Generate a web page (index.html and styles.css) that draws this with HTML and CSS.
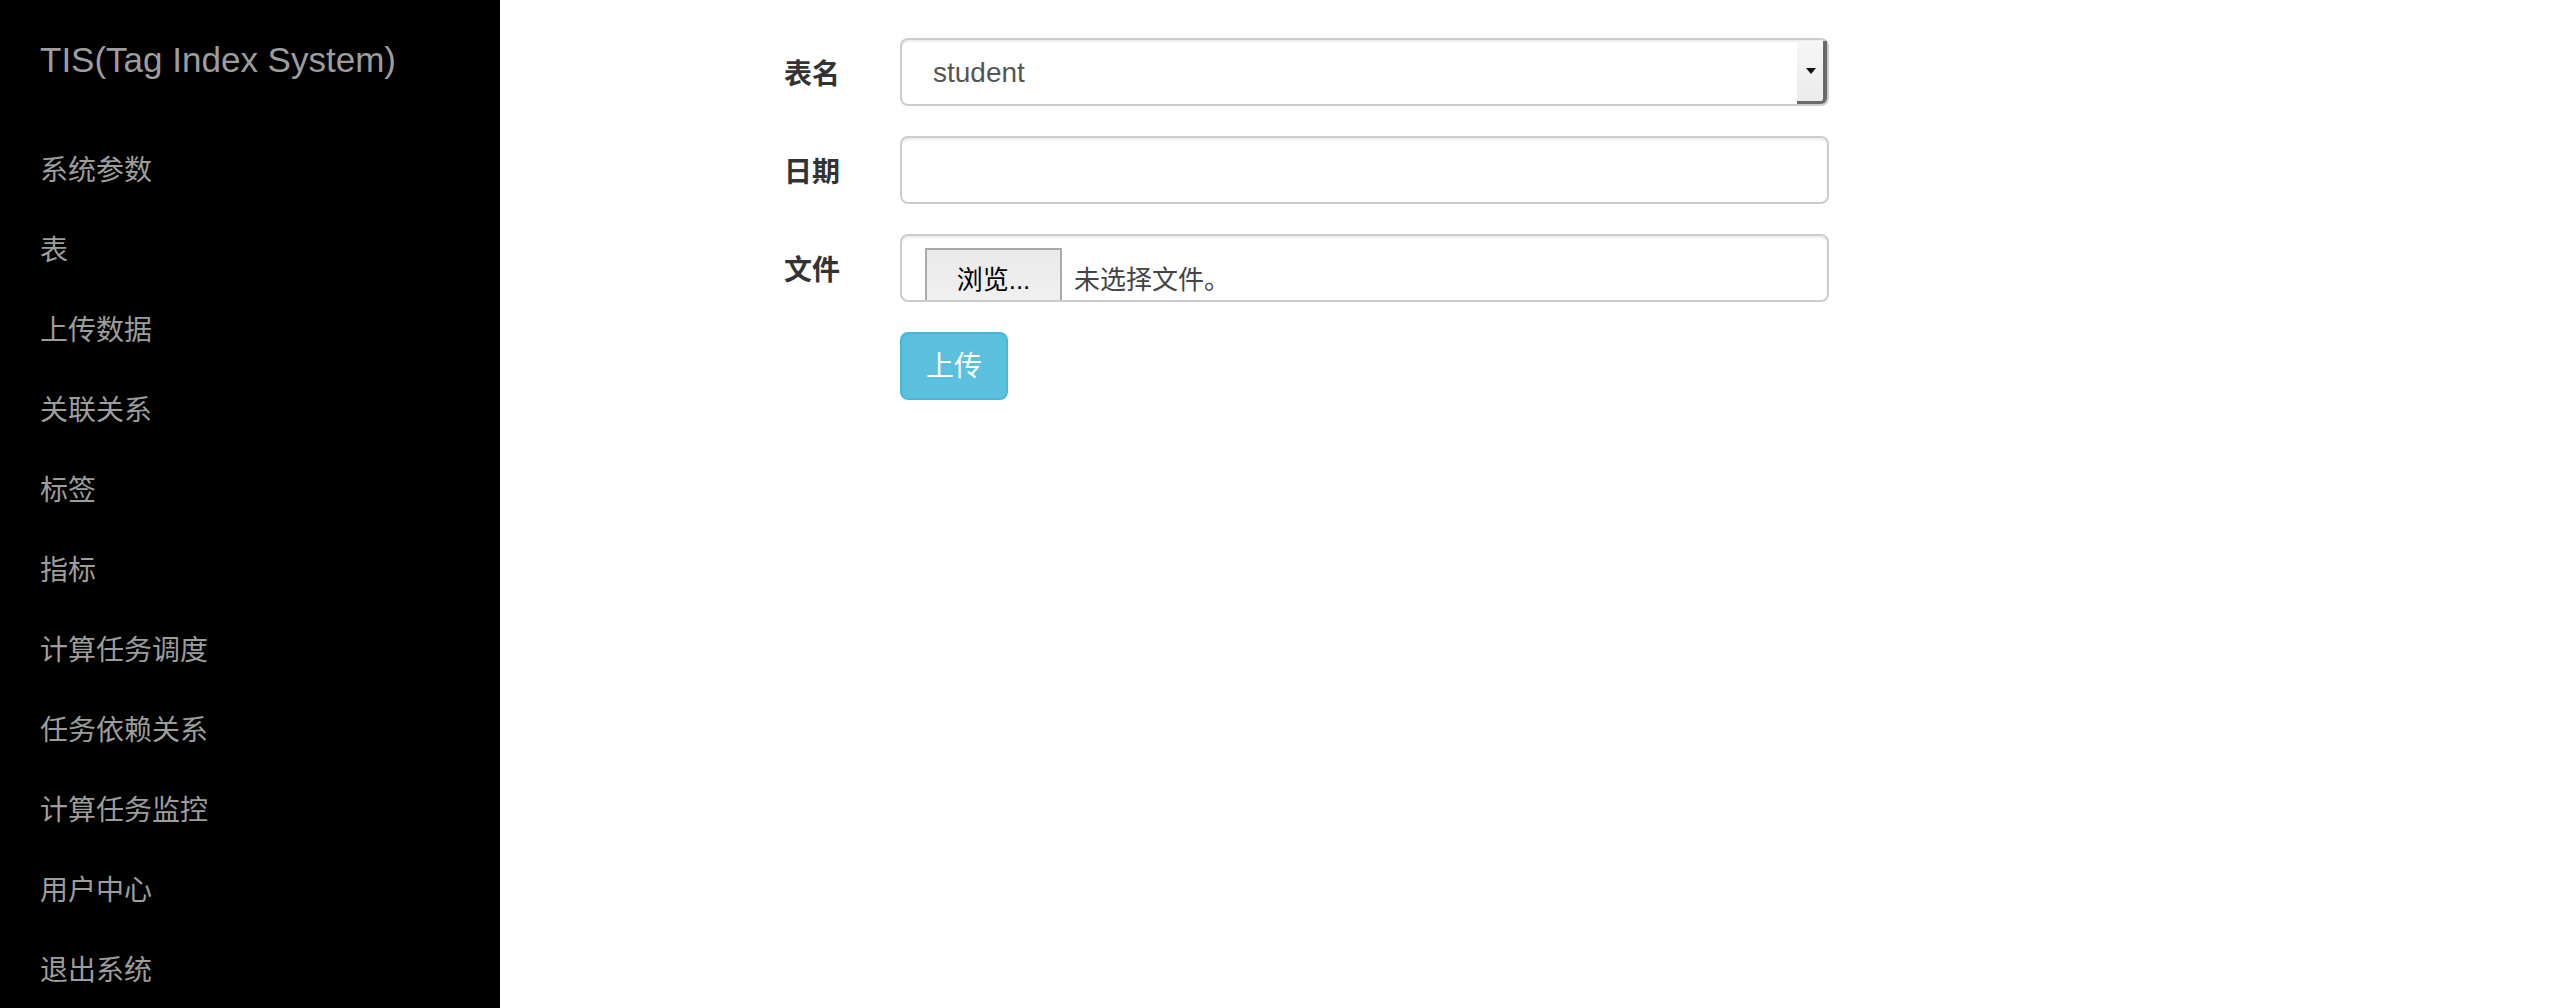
FILE: index.html
```html
<!DOCTYPE html>
<html lang="zh-CN">
<head>
<meta charset="utf-8">
<title>TIS(Tag Index System)</title>
<link rel="stylesheet" href="styles.css">
</head>
<body>
<aside class="sidebar">
  <div class="brand">TIS(Tag Index System)</div>
  <ul class="nav">
    <li>系统参数</li>
    <li>表</li>
    <li>上传数据</li>
    <li>关联关系</li>
    <li>标签</li>
    <li>指标</li>
    <li>计算任务调度</li>
    <li>任务依赖关系</li>
    <li>计算任务监控</li>
    <li>用户中心</li>
    <li>退出系统</li>
  </ul>
</aside>
<main class="main">
  <form class="form">
    <div class="row">
      <label class="label">表名</label>
      <div class="field">
        <div class="control select">
          <span class="select-value">student</span>
          <span class="select-arrow"><span class="tri"></span></span>
        </div>
      </div>
    </div>
    <div class="row">
      <label class="label">日期</label>
      <div class="field">
        <div class="control"></div>
      </div>
    </div>
    <div class="row">
      <label class="label">文件</label>
      <div class="field">
        <div class="control file">
          <span class="file-btn">浏览...</span>
          <span class="file-text">未选择文件。</span>
        </div>
      </div>
    </div>
    <div class="row">
      <div class="label-spacer"></div>
      <div class="field">
        <span class="btn-upload">上传</span>
      </div>
    </div>
  </form>
</main>
</body>
</html>
```

FILE: styles.css
```css
* { box-sizing: border-box; }
html, body { margin: 0; padding: 0; }
body {
  display: flex;
  width: 2560px;
  height: 1008px;
  overflow: hidden;
  background: #fff;
  font-family: "Liberation Sans", "Noto Sans CJK SC", sans-serif;
  color: #333;
}
.sidebar {
  width: 500px;
  flex: 0 0 500px;
  height: 100%;
  background: #000;
  color: #9d9d9d;
}
.brand {
  padding: 40px 40px 0;
  font-size: 35px;
  line-height: 40px;
  height: 80px;
}
.nav {
  list-style: none;
  margin: 51px 0 0;
  padding: 0;
}
.nav li {
  padding: 20px 40px;
  font-size: 28px;
  line-height: 40px;
}
.main {
  flex: 1;
  padding-top: 38px;
}
.form {
  padding-left: 123px;
}
.row {
  display: flex;
  margin-bottom: 30px;
}
.label, .label-spacer {
  width: 247px;
  flex: 0 0 247px;
  padding: 17px 30px 0 0;
  text-align: right;
  font-size: 28px;
  line-height: 40px;
  font-weight: bold;
  color: #333;
}
.field {
  padding-left: 30px;
}
.control {
  position: relative;
  width: 929px;
  height: 68px;
  border: 2px solid #ccc;
  border-radius: 8px;
  box-shadow: inset 0 2px 2px rgba(0,0,0,0.075);
  background: #fff;
  font-size: 28px;
  line-height: 40px;
  color: #555;
}
.select {
  padding: 13px 31px 11px;
}
.select-arrow {
  position: absolute;
  right: 0;
  top: 1px;
  bottom: 0;
  width: 30px;
  background: linear-gradient(#f6f6f6, #ebebeb);
  border-right: 4px solid #6a6a6a;
  border-bottom: 3px solid #6a6a6a;
  border-bottom-right-radius: 6px;
  display: flex;
  align-items: center;
  justify-content: center;
}
.tri {
  width: 0;
  height: 0;
  border-left: 5px solid transparent;
  border-right: 5px solid transparent;
  border-top: 6px solid #111;
  margin-left: 2px;
}
.file {
  overflow: hidden;
  padding: 12px 23px 0;
  display: flex;
  align-items: flex-start;
}
.file-btn {
  flex: 0 0 137px;
  height: 70px;
  border: 2px solid #aaa;
  background: linear-gradient(#e9e9e9, #f3f3f3);
  color: #000;
  font-size: 26px;
  line-height: 30px;
  padding-top: 15px;
  text-align: center;
}
.file-text {
  margin-left: 12px;
  margin-top: 17px;
  font-size: 26px;
  line-height: 30px;
  color: #444;
}
.btn-upload {
  display: inline-block;
  height: 68px;
  padding: 13px 24px 11px;
  font-size: 28px;
  line-height: 40px;
  color: #fff;
  background: #5bc0de;
  border: 2px solid #46b8da;
  border-radius: 8px;
}
```
